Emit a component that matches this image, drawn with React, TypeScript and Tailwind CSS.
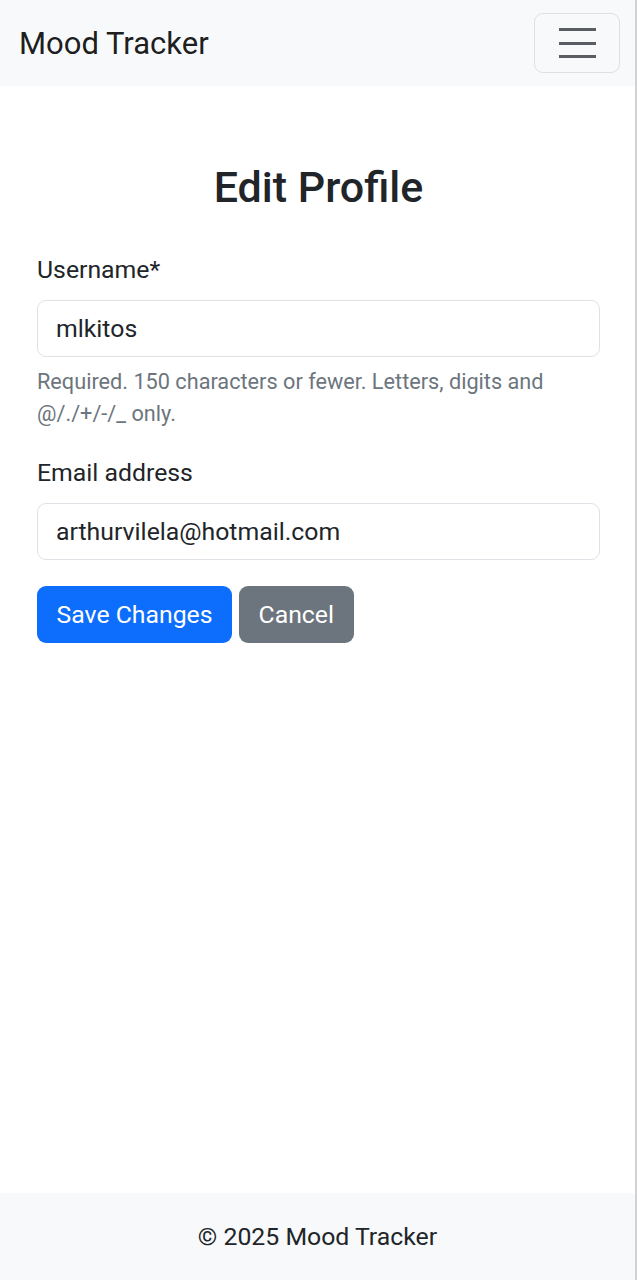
export default function App() {
  return (
    <div
      className="min-h-screen flex flex-col bg-white border-r-2 border-[#d2d2d2] text-[#212529]"
      style={{ fontFamily: 'Roboto, "Liberation Sans", sans-serif' }}
    >
      {/* Navbar */}
      <nav className="h-[86px] bg-[#f8f9fa] flex items-center justify-between pl-[19px] pr-[15px]">
        <a className="text-[31px] leading-none text-black/90">Mood Tracker</a>
        <button className="w-[86px] h-[60px] rounded-[9px] border-[1.5px] border-black/10 flex flex-col items-center justify-center gap-[10.5px]">
          <span className="block w-[37px] h-[3px] bg-[#5a5d61]" />
          <span className="block w-[37px] h-[3px] bg-[#5a5d61]" />
          <span className="block w-[37px] h-[3px] bg-[#5a5d61]" />
        </button>
      </nav>

      {/* Form */}
      <main className="flex-1 pl-[37px] pr-[35px] pt-[72px]">
        <h2 className="text-[43px] leading-[58px] font-medium text-center mb-[36px]">Edit Profile</h2>

        <div className="mb-[25px]">
          <label className="block text-[24.8px] leading-[36px] mb-[12px]">Username*</label>
          <div className="h-[57px] rounded-[9px] border-[1.5px] border-[#dee2e6] px-[18px] flex items-center text-[24.8px]">
            mlkitos
          </div>
          <p className="mt-[9px] text-[21.7px] leading-[32px] text-[#6c757d]">
            Required. 150 characters or fewer. Letters, digits and @/./+/-/_ only.
          </p>
        </div>

        <div className="mb-[26px]">
          <label className="block text-[24.8px] leading-[36px] mb-[12px]">Email address</label>
          <div className="h-[57px] rounded-[9px] border-[1.5px] border-[#dee2e6] px-[18px] flex items-center text-[24.8px]">
            arthurvilela@hotmail.com
          </div>
        </div>

        <div className="flex gap-[7px]">
          <button className="h-[57px] px-[19.5px] rounded-[9px] bg-[#0d6efd] text-white text-[24.8px]">
            Save Changes
          </button>
          <button className="h-[57px] px-[19.5px] rounded-[9px] bg-[#6c757d] text-white text-[24.8px]">
            Cancel
          </button>
        </div>
      </main>

      {/* Footer */}
      <footer className="h-[87px] bg-[#f8f9fa] flex items-center justify-center text-[24.8px]">
        © 2025 Mood Tracker
      </footer>
    </div>
  );
}
